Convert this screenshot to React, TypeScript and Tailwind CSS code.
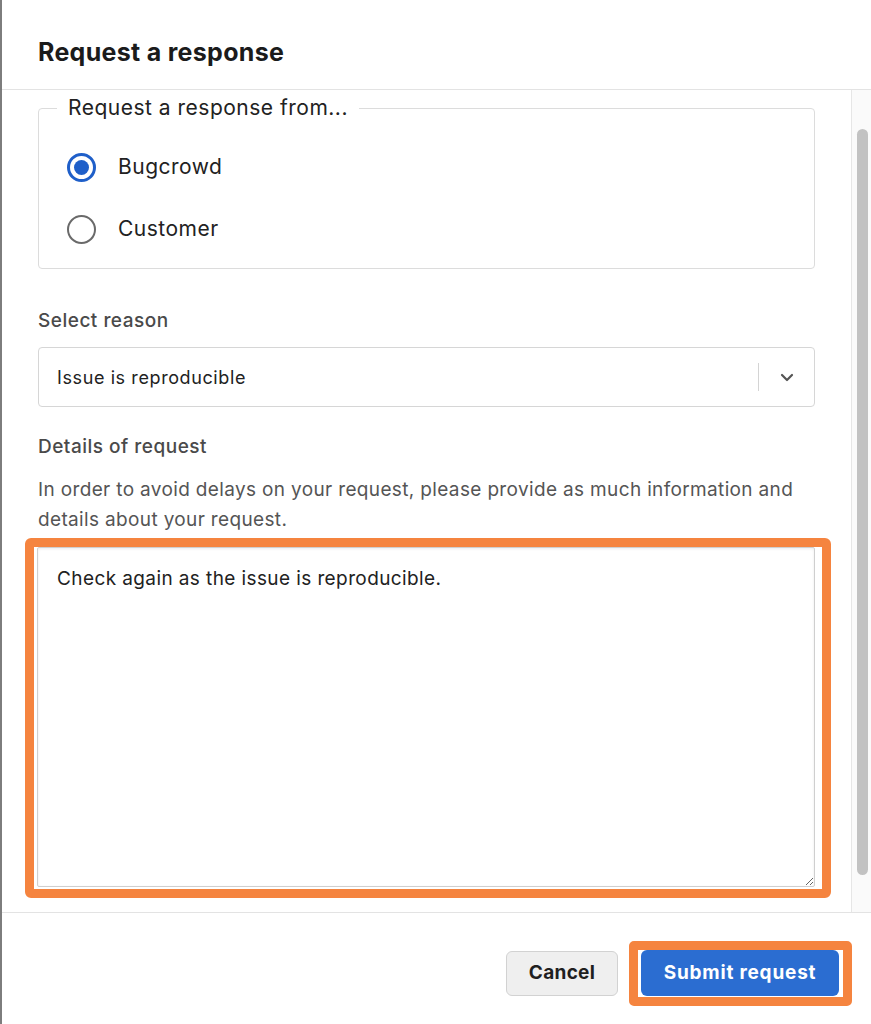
import React from "react";

export default function App() {
  return (
    <div
      className="w-[871px] h-[1024px] bg-white border-l-2 border-[#7d7d7d] flex flex-col overflow-hidden text-[#222]"
      style={{ fontFamily: "Inter, 'Liberation Sans', sans-serif" }}
    >
      {/* Header */}
      <div className="h-[90px] shrink-0 border-b border-[#e3e3e3] pl-[36px] pt-[37px]">
        <h1 className="text-[25px] leading-[31px] font-bold text-[#1b1b1b] tracking-[0.3px]">
          Request a response
        </h1>
      </div>

      {/* Body */}
      <div className="flex flex-1 min-h-0 border-b border-[#e3e3e3]">
        <div className="w-[849px] pl-[36px] pt-[4px]">
          <fieldset className="w-[777px] border border-[#dcdcdc] rounded-[4px] pl-[18px] pr-[18px] pt-[25px] pb-[19px]">
            <legend className="px-[11px] text-[21px] leading-[28px] tracking-[0.5px] text-[#222]">
              Request a response from...
            </legend>
            <div className="flex flex-col gap-[22px]">
              <div className="h-[40px] flex items-center gap-[22px] pl-[10px]">
                <span className="w-[29px] h-[29px] rounded-full border-[3px] border-[#1f5fc9] flex items-center justify-center">
                  <span className="w-[15px] h-[15px] rounded-full bg-[#1f5fc9]" />
                </span>
                <span className="text-[21px] leading-[28px] tracking-[0.5px]">Bugcrowd</span>
              </div>
              <div className="h-[40px] flex items-center gap-[22px] pl-[10px]">
                <span className="w-[29px] h-[29px] rounded-full border-[2.5px] border-[#6a6a6a]" />
                <span className="text-[21px] leading-[28px] tracking-[0.5px]">Customer</span>
              </div>
            </div>
          </fieldset>

          <div className="mt-[40px] text-[19px] leading-[24px] tracking-[0.5px] text-[#4a4a4a] font-medium">
            Select reason
          </div>
          <div className="mt-[14px] w-[777px] h-[60px] border border-[#d6d6d6] rounded-[4px] flex items-center pl-[18px]">
            <span className="flex-1 text-[18px] tracking-[0.6px] text-[#222]">Issue is reproducible</span>
            <span className="w-px h-[28px] bg-[#d4d4d4]" />
            <span className="w-[55px] flex items-center justify-center">
              <svg width="14" height="9" viewBox="0 0 14 9" fill="none">
                <path d="M2 2 L7 7 L12 2" stroke="#555" strokeWidth="2.2" strokeLinecap="round" strokeLinejoin="round" />
              </svg>
            </span>
          </div>

          <div className="mt-[28px] text-[19px] leading-[24px] tracking-[0.5px] text-[#4a4a4a] font-medium">
            Details of request
          </div>
          <p className="mt-[16px] w-[777px] text-[19px] leading-[30px] tracking-[0.35px] text-[#555]">
            In order to avoid delays on your request, please provide as much information and
            details about your request.
          </p>

          <div className="mt-[3px] ml-[-13px] w-[806px] border-[9px] border-[#f5843f] rounded-[6px] pl-[3px] pb-[2px] bg-white">
            <textarea
              readOnly
              defaultValue="Check again as the issue is reproducible."
              className="block w-[778px] h-[340px] border border-[#cfcfcf] rounded-[2px] pl-[19px] pt-[19px] text-[19px] leading-[24px] tracking-[0.4px] text-[#222] resize-y outline-none shadow-[inset_0_1px_3px_rgba(0,0,0,0.08)]"
              style={{ fontFamily: "Inter, 'Liberation Sans', sans-serif" }}
            />
          </div>
        </div>

        {/* Scrollbar */}
        <div className="w-[20px] border-l border-[#e6e6e6] bg-[#fafafa] pt-[39px] pb-[37px] pl-[5px]">
          <div className="w-[11px] h-full rounded-full bg-[#c2c2c2]" />
        </div>
      </div>

      {/* Footer */}
      <div className="h-[111px] shrink-0 flex justify-end items-start pt-[28px] pr-[19px] gap-[11px]">
        <div className="h-[65px] flex items-center">
          <button className="w-[112px] h-[45px] rounded-[6px] bg-[#efefef] border border-[#d2d2d2] text-[19px] font-bold tracking-[0.3px] text-[#1f1f1f]">
            Cancel
          </button>
        </div>
        <div className="border-[9px] border-[#f5843f] rounded-[5px] pl-[3px] pr-[4px] pb-[1px] bg-white">
          <button className="w-[198px] h-[46px] rounded-[6px] bg-[#2b6dd1] text-[19px] font-bold tracking-[0.8px] text-white">
            Submit request
          </button>
        </div>
      </div>
    </div>
  );
}
